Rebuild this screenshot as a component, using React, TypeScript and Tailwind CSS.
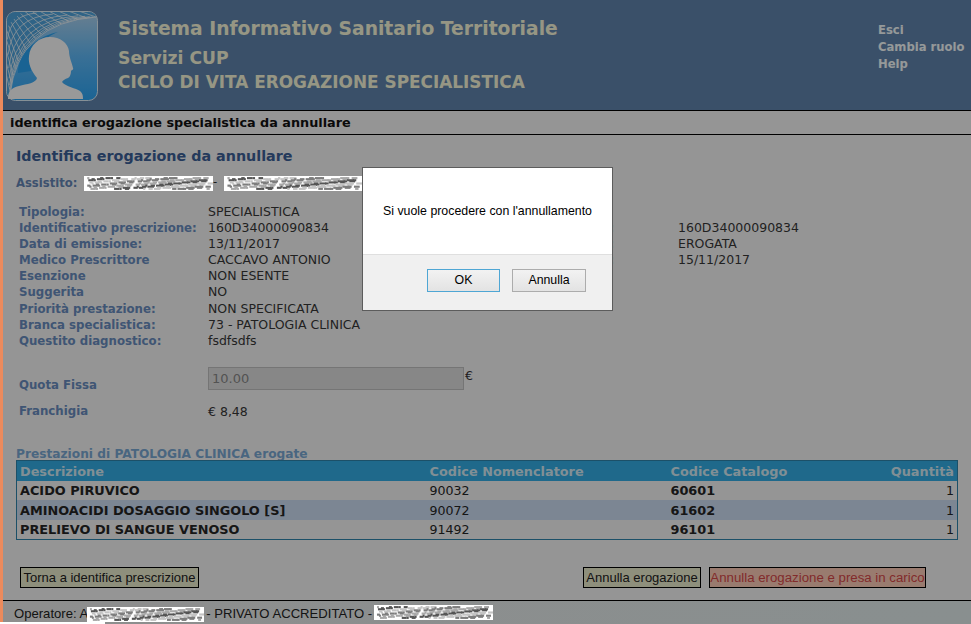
// warped grid in the top-left of the logo
const envelope = (t: number) => ({
  x: (1 - t) * (1 - t) * 4 + 2 * t * (1 - t) * 12 + t * t * 90,
  y: (1 - t) * (1 - t) * 80 + 2 * t * (1 - t) * 12 + t * t * 6,
});

const Logo = () => {
  const arcs = [1, 0.97, 0.93, 0.88, 0.8, 0.68, 0.52, 0.34];
  const fans = Array.from({ length: 17 }, (_, i) => i / 16);
  return (
    <svg width="92" height="90" viewBox="0 0 92 90" className="shrink-0">
      <defs>
        <linearGradient id="logoBg" x1="0.7" y1="0" x2="0.7" y2="1">
          <stop offset="0" stopColor="#b1d5f0" />
          <stop offset="0.5" stopColor="#61bbfa" />
          <stop offset="1" stopColor="#2da7f7" />
        </linearGradient>
        <clipPath id="logoClip">
          <rect x="1" y="1" width="90" height="88" rx="8" />
        </clipPath>
      </defs>
      <rect x="0.5" y="0.5" width="91" height="89" rx="9" fill="url(#logoBg)" stroke="#e0f0fa" />
      <g clipPath="url(#logoClip)">
        <path d="M0 0H91L90 6Q12 12 4 84H0Z" fill="#4fa6e0" />
        <g fill="none" stroke="#ffffff" strokeWidth="0.7">
          {arcs.map((s) => (
            <path key={s} d={`M${4 * s} ${84 * s}Q${12 * s} ${12 * s} ${90 * s} ${6 * s}`} />
          ))}
          {fans.map((t) => {
            const p = envelope(t);
            return <path key={t} d={`M${p.x} ${p.y}L${p.x * 0.55 - 8 + t * 6} ${p.y * 0.55 - 12 + (1 - t) * 4}`} />;
          })}
        </g>
      </g>
      <path d="M12 62C12 44 28 26 52 21C36 27 24 42 25 60Z" fill="#2aa5f5" />
      <path
        d="M2 88C2 80 5 77 13 75C21 73 30 72 31 67C25 60 22 52 23 45C24 34 33 26 44 26C54 26 62 32 63 40C63 46 66 52 67 57C68 59 65 59 65 60C65 63 64 66 62 67C59 68 57 69 56 71C60 76 70 77 74 80C77 83 77 85 77 88Z"
        fill="#ffffff"
      />
    </svg>
  );
};

// scribble of grey specks, same look as the pasted-over blocks in the screenshot
const specks = Array.from({ length: 150 }, (_, i) => ({
  x: 3 + ((i * 23) % 113),
  y: 1 + ((i * 17) % 11),
  w: 2 + ((i * 7) % 5),
  fill: ["#a8a8a8", "#7d7d7d", "#c4c4c4", "#555555"][i % 4],
}));

const Redacted = ({ className }: { className: string }) => (
  <span className={`relative z-20 inline-block overflow-hidden bg-white ${className}`}>
    <svg width="100%" height="100%" preserveAspectRatio="none" viewBox="0 0 120 14" className="block">
      {specks.map((s, i) => (
        <rect key={i} x={s.x} y={s.y} width={s.w} height="2" fill={s.fill} />
      ))}
    </svg>
  </span>
);

const fields = [
  ["Tipologia:", "SPECIALISTICA", "", ""],
  ["Identificativo prescrizione:", "160D34000090834", "Codice prescrizione:", "160D34000090834"],
  ["Data di emissione:", "13/11/2017", "Stato:", "EROGATA"],
  ["Medico Prescrittore", "CACCAVO ANTONIO", "Data erogazione:", "15/11/2017"],
  ["Esenzione", "NON ESENTE", "", ""],
  ["Suggerita", "NO", "", ""],
  ["Priorità prestazione:", "NON SPECIFICATA", "", ""],
  ["Branca specialistica:", "73 - PATOLOGIA CLINICA", "", ""],
  ["Questito diagnostico:", "fsdfsdfs", "", ""],
];

const rows = [
  ["ACIDO PIRUVICO", "90032", "60601", "1"],
  ["AMINOACIDI DOSAGGIO SINGOLO [S]", "90072", "61602", "1"],
  ["PRELIEVO DI SANGUE VENOSO", "91492", "96101", "1"],
];

const verdana = "font-['DejaVu_Sans',sans-serif]";
const arial = "font-['Liberation_Sans',sans-serif]";

export default function App() {
  return (
    <div className={`relative flex h-[624px] w-[971px] overflow-hidden bg-[#f8f8f8] ${verdana}`}>
      <div className="relative z-20 w-[3px] shrink-0 bg-[#ec8a5c]" />
      <div className="flex min-w-0 flex-1 flex-col">
        <header className="flex h-[111px] shrink-0 border-b border-[#000] bg-[#6285af] pl-[3px] pt-[11px]">
          <Logo />
          <div className="ml-[20px] flex w-[760px] flex-col font-bold text-[#fbfbdc]">
            <div className="mt-[5px] text-[18.7px] leading-[26px]">Sistema Informativo Sanitario Territoriale</div>
            <div className="mt-[5px] text-[17.2px] leading-[22px]">Servizi CUP</div>
            <div className="mt-[2px] text-[16.9px] leading-[22px]">CICLO DI VITA EROGAZIONE SPECIALISTICA</div>
          </div>
          <nav className="flex flex-col pt-[11px] text-[11.6px] font-bold leading-[17px] text-[#f8ffff]">
            <span>Esci</span>
            <span>Cambia ruolo</span>
            <span>Help</span>
          </nav>
        </header>

        <div className="flex h-[24px] shrink-0 items-center border-b border-[#000] pl-[7px] text-[12.8px] font-bold text-[#111]">
          identifica erogazione specialistica da annullare
        </div>

        <main className="flex flex-1 flex-col pl-[13px] pr-[13px]">
          <h1 className="mt-[11px] text-[14.3px] font-bold leading-[20px] text-[#3c6199]">Identifica erogazione da annullare</h1>
          <div className="mt-[9px] flex h-[16px] items-center text-[11.6px] font-bold text-[#6688b8]">
            <span className="w-[68px] pt-[2px]">Assistito:</span>
            <Redacted className="h-[15px] w-[129px]" />
            <span className="w-[11px] font-normal text-[#333]">-</span>
            <Redacted className="h-[15px] w-[138px]" />
          </div>

          <div className="mt-[13px] grid grid-cols-[189px_470px_1fr] pl-[3px] text-[12.5px] leading-[16.1px] text-[#383838]">
            {fields.map(([label, value, label2, value2]) => (
              <div key={label} className="contents">
                <span className="text-[11.75px] font-bold text-[#6a8ec2]">{label}</span>
                <span className="flex justify-between">
                  <span>{value}</span>
                  <span className="pr-[64px] text-[11.75px] font-bold text-[#6a8ec2]">{label2}</span>
                </span>
                <span>{value2}</span>
              </div>
            ))}
          </div>

          <div className="mt-[18px] flex pl-[3px] text-[12.5px]">
            <span className="mt-[10px] w-[189px] text-[11.75px] font-bold text-[#6a8ec2]">Quota Fissa</span>
            <input
              readOnly
              value="10.00"
              className="h-[23px] w-[256px] border border-[#c4c4c4] bg-[#e2e2e2] px-[3px] text-[13px] text-[#8a8a8a] outline-none"
            />
            <span className="ml-[1px] text-[#383838]">€</span>
          </div>
          <div className="mt-[9px] flex pl-[3px] text-[12.5px]">
            <span className="w-[189px] text-[11.75px] font-bold text-[#6a8ec2]">Franchigia</span>
            <span className="text-[#383838]">€ 8,48</span>
          </div>

          <h2 className="mt-[26px] text-[12.2px] font-bold leading-[12px] text-[#7baad6]">Prestazioni di PATOLOGIA CLINICA erogate</h2>
          <table className="w-[942px] border-collapse border border-[#2f86ad] text-[12.85px]">
            <thead>
              <tr className="h-[20px] bg-[#34b0e8] text-left font-bold text-[#d8eef8]">
                <th className="w-[413px] pl-[3px] pt-[2px] leading-none">Descrizione</th>
                <th className="w-[241px] pt-[2px] leading-none">Codice Nomenclatore</th>
                <th className="pt-[2px] leading-none">Codice Catalogo</th>
                <th className="pr-[3px] pt-[2px] text-right leading-none">Quantità</th>
              </tr>
            </thead>
            <tbody className="text-[#262626]">
              {rows.map((r, i) => (
                <tr key={r[0]} className={i === 1 ? "h-[19.5px] bg-[#cfdff5]" : "h-[19.5px]"}>
                  <td className="pl-[3px] pt-[2px] font-bold leading-none">{r[0]}</td>
                  <td className="pt-[2px] text-[12.6px] leading-none">{r[1]}</td>
                  <td className="pt-[2px] font-bold leading-none">{r[2]}</td>
                  <td className="pr-[3px] pt-[2px] text-right text-[12.6px] leading-none">{r[3]}</td>
                </tr>
              ))}
            </tbody>
          </table>

          <div className={`mt-[27px] flex items-center whitespace-nowrap pl-[4px] text-[13px] ${arial}`}>
            <button className="h-[21px] w-[179px] border border-[#000] bg-[#edeecf] text-center leading-none text-[#222]">
              Torna a identifica prescrizione
            </button>
            <button className="ml-[384px] h-[21px] w-[118px] border border-[#000] bg-[#edeecf] text-center leading-none text-[#222]">
              Annulla erogazione
            </button>
            <button className="ml-[8px] h-[21px] w-[217px] border border-[#000] bg-[#ffcdba] text-center text-[13.25px] leading-none text-[#d94848]">
              Annulla erogazione e presa in carico
            </button>
          </div>
        </main>

        <footer className={`flex h-[24px] shrink-0 items-center border-t border-[#000] bg-gradient-to-r from-[#ededed] to-[#e4eeee] pl-[11px] pt-[3px] text-[13.1px] text-[#222] ${arial}`}>
          <span>Operatore: A</span>
          <Redacted className="-ml-[1px] h-[15px] w-[117px]" />
          <span className="ml-[2px] whitespace-pre">- PRIVATO ACCREDITATO - </span>
          <Redacted className="-ml-[2px] -mt-[4px] h-[15px] w-[119px]" />
        </footer>
      </div>

      <div className="absolute inset-y-0 left-[3px] right-0 z-10 bg-black/40" />
      <div className="absolute bottom-0 left-0 z-20 h-[2px] w-[105px] bg-white" />

      <div className={`absolute left-[363px] top-[168px] z-30 flex h-[142px] w-[249px] flex-col bg-white shadow-[0_0_0_1px_#5c5c5c] ${arial}`}>
        <div className="flex h-[86px] items-center justify-center text-[12.35px] text-[#000]">Si vuole procedere con l'annullamento</div>
        <div className="flex flex-1 items-center justify-end gap-[12px] border-t border-[#dfdfdf] bg-[#f0f0f0] pr-[26px] pb-[4px] text-[12.35px] text-[#000]">
          <button className="h-[23px] w-[73px] border border-[#4ea6d4] bg-gradient-to-b from-[#f2f2f2] to-[#e3e3e3] pb-[1px]">OK</button>
          <button className="h-[23px] w-[74px] border border-[#acacac] bg-gradient-to-b from-[#f2f2f2] to-[#e3e3e3] pb-[1px]">Annulla</button>
        </div>
      </div>
    </div>
  );
}
